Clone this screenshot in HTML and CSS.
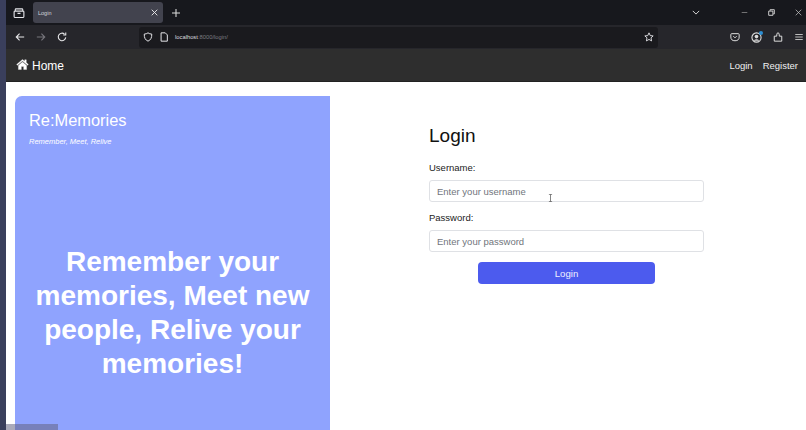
FILE: index.html
```html
<!DOCTYPE html>
<html lang="en">
<head>
<meta charset="utf-8">
<title>Login</title>
<link rel="stylesheet" href="styles.css">
</head>
<body>
<div class="desktop">
  <div class="strip"></div>
  <div class="window">
    <div class="tabbar">
      <div class="tabside">
        <svg class="ico" viewBox="0 0 16 16" width="12" height="12"><path d="M3 5.500V3.500Q3 2.500 4 2.500H12Q13 2.500 13 3.500V5.500M2.500 5.500H13.500Q14.500 5.500 14.500 6.500V12.500Q14.500 14 13 14H3Q1.500 14 1.500 12.500V6.500Q1.500 5.500 2.500 5.500ZM6 8.500H10" fill="none" stroke="#e4e4e8" stroke-width="1.500"/></svg>
      </div>
      <div class="tab">
        <span class="tabtitle">Login</span>
        <svg viewBox="0 0 10 10" width="7" height="7"><path d="M1 1L9 9M9 1L1 9" stroke="#eee" stroke-width="1.300"/></svg>
      </div>
      <svg class="plus" viewBox="0 0 10 10" width="8" height="8"><path d="M5 0V10M0 5H10" stroke="#ddd" stroke-width="1.300"/></svg>
      <div class="spacer"></div>
      <svg class="chev" viewBox="0 0 10 6" width="8" height="5"><path d="M1 1L5 5L9 1" fill="none" stroke="#ddd" stroke-width="1.200"/></svg>
      <div class="winbtns">
        <svg viewBox="0 0 10 10" width="7" height="7"><path d="M1 5H9" stroke="#999" stroke-width="1"/></svg>
        <svg viewBox="0 0 10 10" width="7" height="7"><path d="M3 2.500V1H9V7H7.500M1 3H7V9H1Z" fill="none" stroke="#ddd" stroke-width="1.300"/></svg>
        <svg viewBox="0 0 10 10" width="7" height="7"><path d="M1 1L9 9M9 1L1 9" stroke="#ccc" stroke-width="1"/></svg>
      </div>
    </div>
    <div class="toolbar">
      <div class="navbtns">
        <svg viewBox="0 0 12 12" width="10" height="10"><path d="M11 6H1.500M5.500 2L1.500 6L5.500 10" fill="none" stroke="#e8e8ea" stroke-width="1.300"/></svg>
        <svg viewBox="0 0 12 12" width="10" height="10"><path d="M1 6H10.500M6.500 2L10.500 6L6.500 10" fill="none" stroke="#77767d" stroke-width="1.300"/></svg>
        <svg viewBox="0 0 12 12" width="10" height="10"><path d="M10.500 6.500A4.500 4.500 0 1 1 9 2.500M10.500 0.500V3.500H7.500" fill="none" stroke="#e8e8ea" stroke-width="1.300"/></svg>
      </div>
      <div class="urlbar">
        <svg viewBox="0 0 12 12" width="10" height="10"><path d="M6 1Q8 2.500 10.500 2.500Q10.800 9 6 11Q1.200 9 1.500 2.500Q4 2.500 6 1Z" fill="none" stroke="#e4e4e8" stroke-width="1.200"/></svg>
        <svg viewBox="0 0 12 12" width="10" height="10"><path d="M2.500 1H7.500L10 3.500V11H2.500Z" fill="none" stroke="#e4e4e8" stroke-width="1.200"/></svg>
        <span class="url"><b>localhost</b>:8000/login/</span>
        <div class="spacer"></div>
        <svg viewBox="0 0 12 12" width="10" height="10"><path d="M6 1L7.500 4.300L11 4.700L8.400 7L9.100 10.700L6 8.900L2.900 10.700L3.600 7L1 4.700L4.500 4.300Z" fill="none" stroke="#e4e4e8" stroke-width="1.100"/></svg>
      </div>
      <div class="tools">
        <svg viewBox="0 0 12 12" width="10" height="10"><path d="M2 2H10Q11 2 11 3V6A5 4.500 0 0 1 1 6V3Q1 2 2 2ZM4 5L6 7L8 5" fill="none" stroke="#ddd" stroke-width="1.200"/></svg>
        <span class="acct">
          <svg viewBox="0 0 12 12" width="11" height="11"><circle cx="6" cy="6" r="5" fill="none" stroke="#ddd" stroke-width="1.200"/><circle cx="6" cy="5" r="2" fill="#ddd"/><path d="M2.800 9.500Q6 6.500 9.200 9.500" fill="#ddd"/></svg>
          <i class="dot"></i>
        </span>
        <svg viewBox="0 0 12 12" width="10" height="10"><path d="M1.500 5H4.500V3.500Q4.500 1 6 1Q7.500 1 7.500 3.500V5H10.500V11H1.500Z" fill="none" stroke="#ddd" stroke-width="1.200"/></svg>
        <svg viewBox="0 0 12 12" width="10" height="10"><path d="M1.500 3H10.500M1.500 6H10.500M1.500 9H10.500" stroke="#bbb" stroke-width="1.200"/></svg>
      </div>
    </div>
    <nav class="navbar">
      <a class="brand">
        <svg viewBox="0 0 16 14" width="13" height="11"><path d="M8 0.500L0.500 7L1.500 8L8 2.500L14.500 8L15.500 7L12.800 4.600V1H10.800V2.900ZM8 3.700L2.800 8.200V13.500H6.500V9.500H9.500V13.500H13.200V8.200Z" fill="#fff" stroke="#fff" stroke-width="0.400"/></svg>
        Home
      </a>
      <div class="navlinks"><a>Login</a><a>Register</a></div>
    </nav>
    <main class="main">
      <section class="hero">
        <h2 class="logo">Re:Memories</h2>
        <p class="tagline">Remember, Meet, Relive</p>
        <h1 class="headline">Remember your memories, Meet new people, Relive your memories!</h1>
      </section>
      <section class="formside">
        <form class="form">
          <h2 class="formtitle">Login</h2>
          <label class="lbl">Username:</label>
          <input class="field" type="text" placeholder="Enter your username">
          <label class="lbl">Password:</label>
          <input class="field" type="password" placeholder="Enter your password">
          <button class="submit" type="button">Login</button>
        </form>
      </section>
    </main>
  </div>
</div>
<div class="status"></div>
<svg class="cursor" viewBox="0 0 6 10" width="5" height="8"><path d="M1 0.500H5M1 9.500H5M3 0.500V9.500" stroke="#555" stroke-width="0.900" fill="none"/></svg>
</body>
</html>
```
FILE: styles.css
```css
* { box-sizing: border-box; }
html, body { margin: 0; height: 100%; overflow: hidden; }
body { font-family: "Liberation Sans", Arial, sans-serif; background: #fff; position: relative; }
.desktop { display: flex; height: 430px; width: 806px; }
.strip { width: 6px; background: #3a3f5c; flex: none; }
.window { flex: 1; display: flex; flex-direction: column; min-width: 0; }
.spacer { flex: 1; }

.tabbar { height: 25px; background: #17181d; display: flex; align-items: center; flex: none; }
.tabside { width: 27px; display: flex; justify-content: center; padding-right: 2px; }
.tab { width: 130px; height: 21px; background: #42434e; border-radius: 3px; display: flex; align-items: center; justify-content: space-between; padding: 0 5px; }
.tabtitle { font-size: 5.500px; color: #d4d4da; }
.plus { margin-left: 9px; }
.chev { margin-right: 41px; }
.winbtns { display: flex; gap: 20px; margin-right: 4px; }

.toolbar { height: 24px; background: #26262b; display: flex; align-items: center; flex: none; padding-left: 9px; }
.navbtns { display: flex; gap: 11px; width: 124px; }
.urlbar { width: 519px; height: 21px; background: #1a1a1e; border-radius: 3px; display: flex; align-items: center; gap: 6px; padding: 0 4px; }
.url { font-size: 5.800px; color: #7a7a82; }
.url b { font-weight: normal; color: #dadadf; }
.tools { display: flex; align-items: center; gap: 11px; margin-left: 72px; }
.acct { position: relative; display: flex; }
.dot { position: absolute; width: 4px; height: 4px; right: -1px; top: -1px; border-radius: 50%; background: #2d8fd5; }

.navbar { height: 33px; background: #2e2e2e; border-bottom: 1px solid #222; display: flex; align-items: center; justify-content: space-between; padding: 0 8px 0 10px; color: #fff; flex: none; }
.brand { display: flex; align-items: center; gap: 3px; padding-top: 1px; font-size: 12px; color: #fff; }
.brand svg { margin-bottom: 2px; }
.navlinks { display: flex; gap: 10px; font-size: 9.500px; color: #f0f0f0; }

.main { flex: 1; display: flex; min-height: 0; background: #fff; padding-left: 9px; padding-top: 14px; }
.hero { width: 315px; background: #8fa3fe; border-radius: 7px 0 0 0; padding: 14px 14px 0; color: #fff; flex: none; }
.logo { margin: 0; font-size: 16.400px; font-weight: normal; line-height: 20px; }
.tagline { margin: 7px 0 0; font-size: 7.500px; font-style: italic; line-height: 10px; }
.headline { margin: 98px 0 0; font-size: 28px; line-height: 34px; font-weight: bold; text-align: center; }

.formside { flex: 1; padding-left: 99px; }
.form { width: 275px; display: flex; flex-direction: column; }
.formtitle { margin: 29px 0 0; font-size: 19px; font-weight: normal; line-height: 22px; color: #111; }
.lbl { font-size: 9.500px; color: #222; line-height: 12px; margin-top: 10px; }
.formtitle + .lbl { margin-top: 15px; }
.field { height: 22px; margin-top: 6px; border: 1px solid #dfe1e5; border-radius: 3px; padding: 0 7px; font: 9.500px "Liberation Sans", Arial, sans-serif; outline: none; background: #fff; }
.field::placeholder { color: #70757c; opacity: 1; }
.submit { align-self: center; width: 177px; height: 22px; margin-top: 10px; background: #4c5bee; color: #f0f0ff; border: 0; border-radius: 4px; font: 9.600px "Liberation Sans", Arial, sans-serif; }

.status { position: absolute; left: 6px; bottom: 0; width: 52px; height: 6px; background: rgba(100, 100, 130, 0.55); }
.cursor { position: absolute; left: 548px; top: 194px; }
```
